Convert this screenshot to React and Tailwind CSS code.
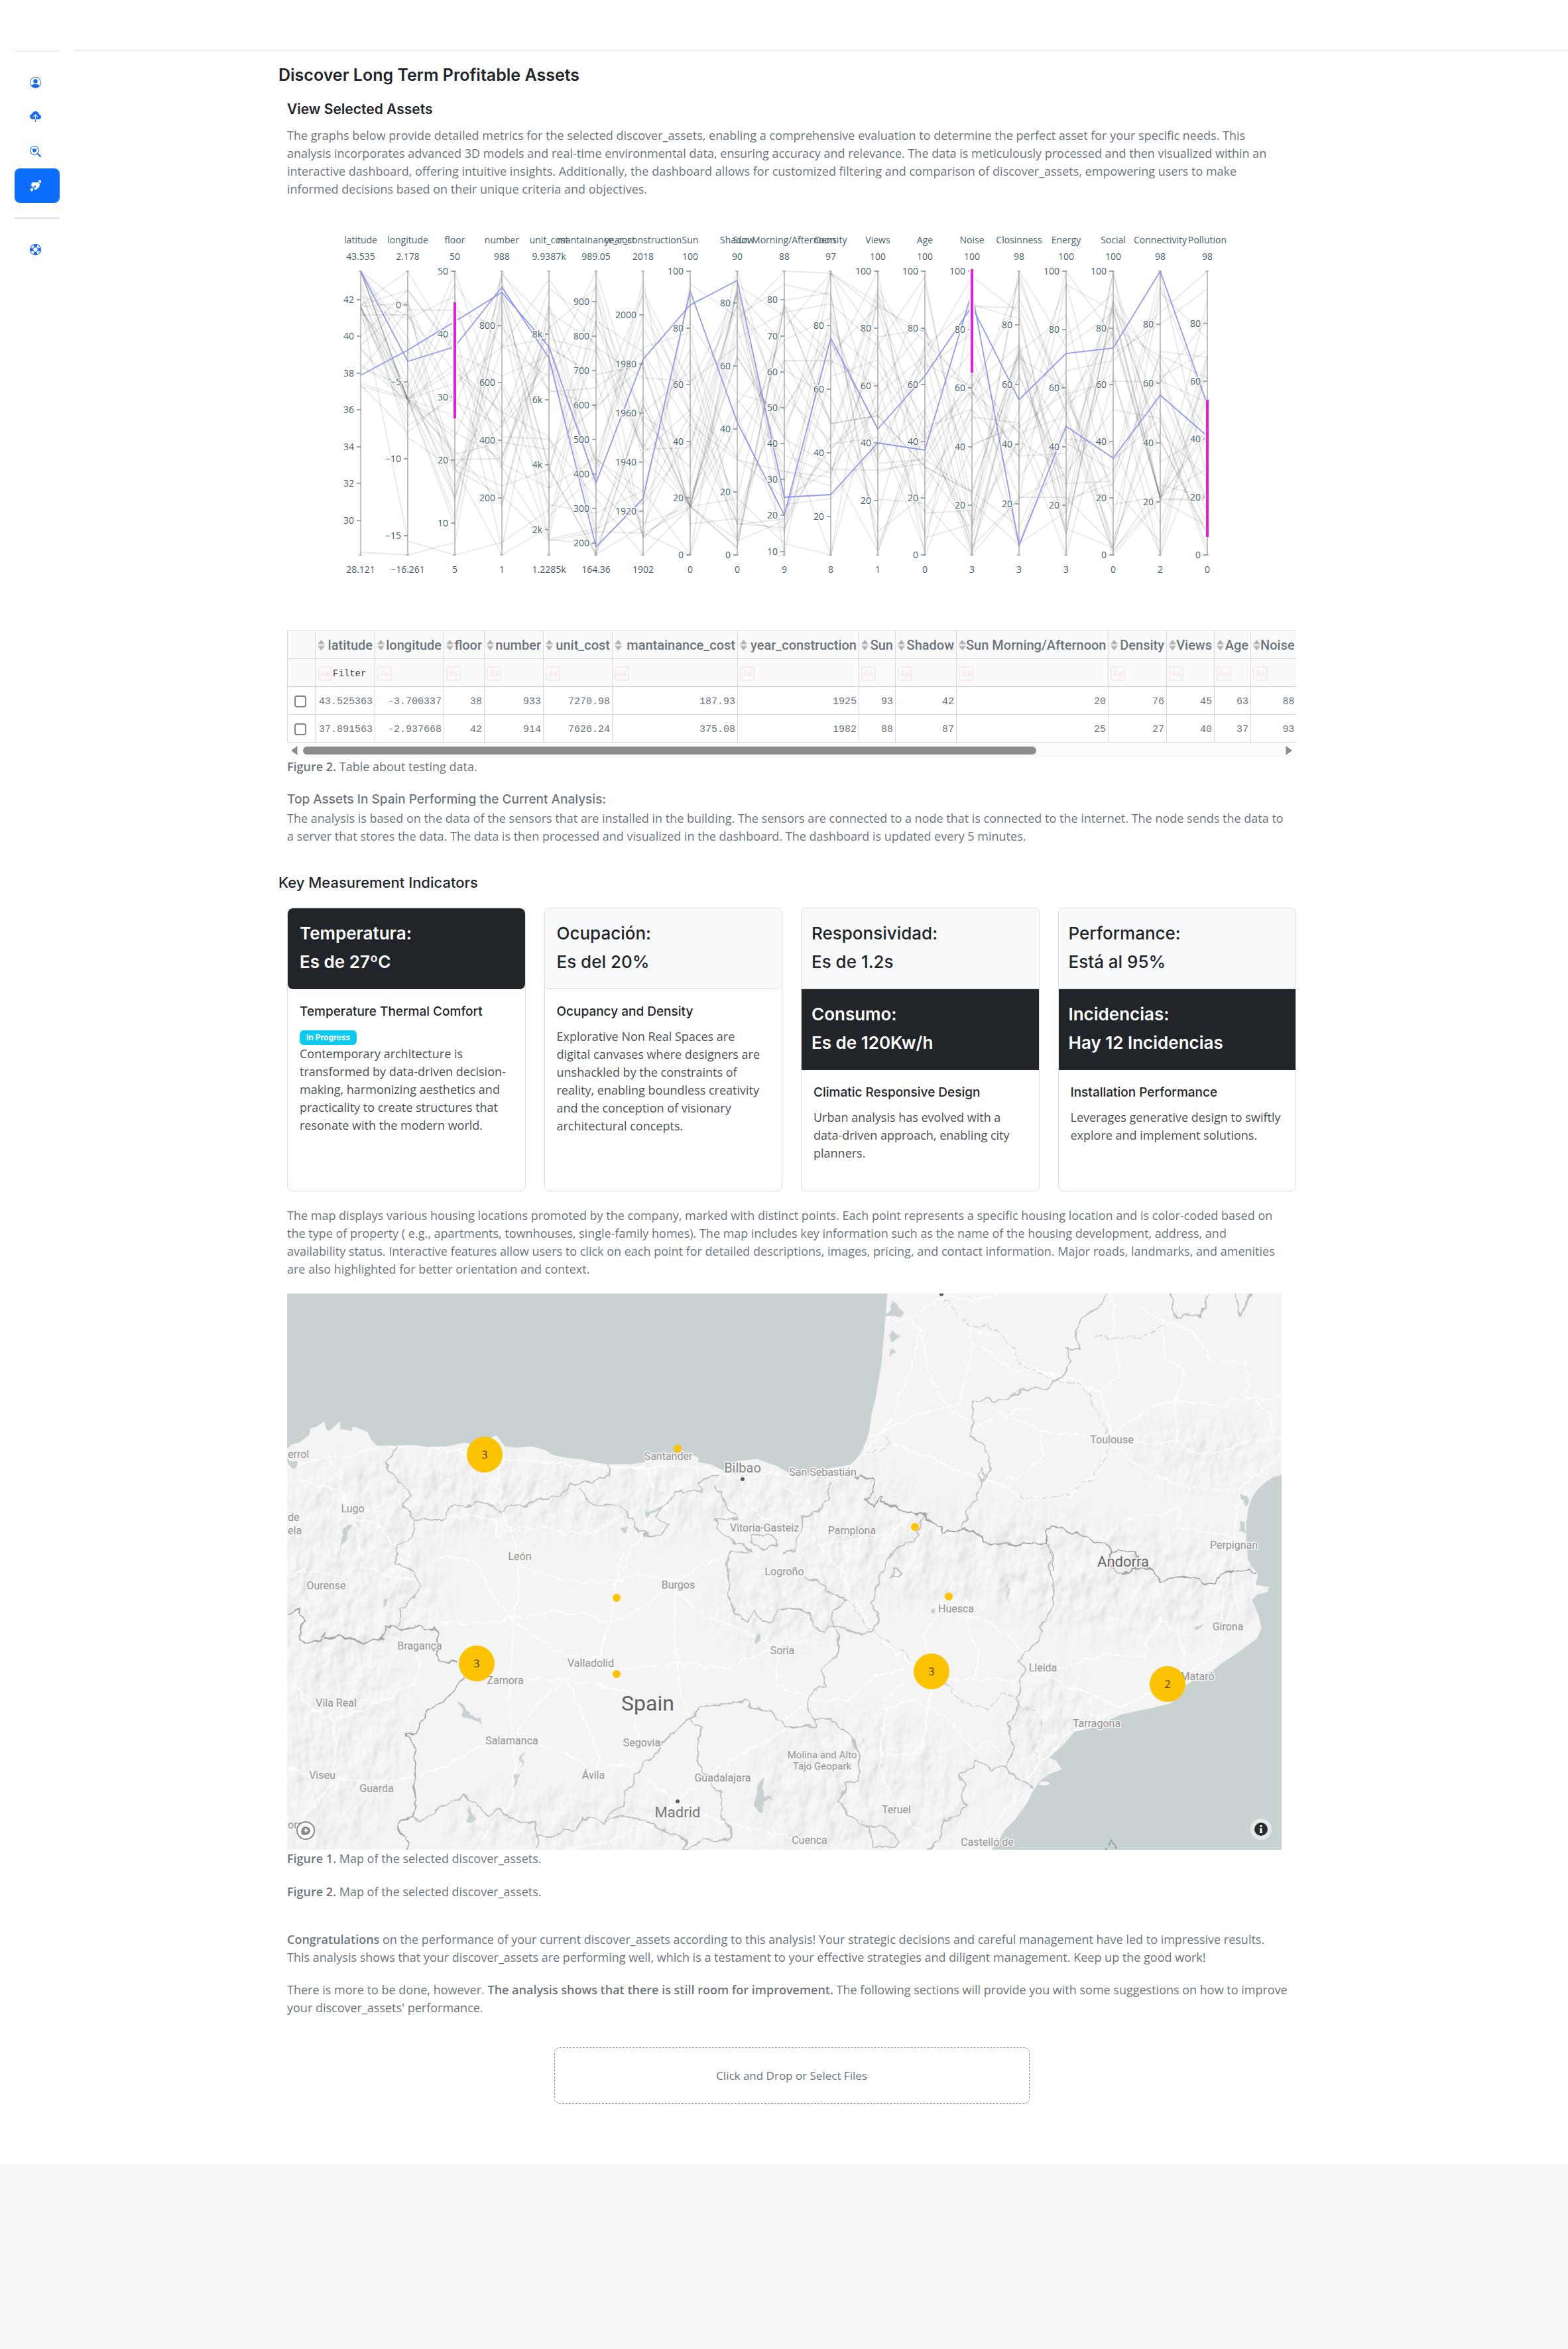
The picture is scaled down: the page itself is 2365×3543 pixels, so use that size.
import React from "react";
import {
  BsPersonCircle,
  BsCloudUploadFill,
  BsSearchHeart,
  BsArrowThroughHeartFill,
  BsLifePreserver,
} from "react-icons/bs";

/* ---------- Sidebar ---------- */

const NAV = [
  { label: "Profile", Icon: BsPersonCircle },
  { label: "Upload", Icon: BsCloudUploadFill },
  { label: "Search", Icon: BsSearchHeart },
  { label: "Discover", Icon: BsArrowThroughHeartFill, active: true },
];

function Sidebar() {
  return (
    <nav aria-label="Main" className="w-28 shrink-0 px-[22px] pt-[76px]">
      <div className="border-t-2 border-[#ececec] pt-5">
        {NAV.map(({ label, Icon, active }) => (
          <a
            key={label}
            href={"#" + label.toLowerCase()}
            aria-label={label}
            className={
              active
                ? "flex h-[52px] items-center justify-center rounded-lg bg-[#0d6efd] pr-1.5 text-white"
                : "flex h-[52px] items-center justify-center pr-1.5 text-[#1769ef]"
            }
          >
            <Icon className="size-[17px]" />
          </a>
        ))}
      </div>
      <div className="mt-[22px] border-t-2 border-[#dedede] pt-5">
        <a href="#help" aria-label="Help" className="flex h-[52px] items-center justify-center pr-1.5 text-[#1769ef]">
          <BsLifePreserver className="size-[17px]" />
        </a>
      </div>
    </nav>
  );
}

/* ---------- Parallel coordinates chart ---------- */

const AXES = [
  { name: "latitude", min: 28.121, max: 43.535, ticks: [30, 32, 34, 36, 38, 40, 42] },
  { name: "longitude", min: -16.261, max: 2.178, ticks: [-15, -10, -5, 0] },
  { name: "floor", min: 5, max: 50, ticks: [10, 20, 30, 40, 50] },
  { name: "number", min: 1, max: 988, ticks: [200, 400, 600, 800] },
  { name: "unit_cost", min: 1228.5, max: 9938.7, ticks: [2000, 4000, 6000, 8000], k: true, lo: "1.2285k", hi: "9.9387k" },
  { name: "mantainance_cost", min: 164.36, max: 989.05, ticks: [200, 300, 400, 500, 600, 700, 800, 900] },
  { name: "year_construction", min: 1902, max: 2018, ticks: [1920, 1940, 1960, 1980, 2000] },
  { name: "Sun", min: 0, max: 100, ticks: [0, 20, 40, 60, 80, 100] },
  { name: "Shadow", min: 0, max: 90, ticks: [0, 20, 40, 60, 80] },
  { name: "Sun Morning/Afternoon", min: 9, max: 88, ticks: [10, 20, 30, 40, 50, 60, 70, 80] },
  { name: "Density", min: 8, max: 97, ticks: [20, 40, 60, 80] },
  { name: "Views", min: 1, max: 100, ticks: [20, 40, 60, 80, 100] },
  { name: "Age", min: 0, max: 100, ticks: [0, 20, 40, 60, 80, 100] },
  { name: "Noise", min: 3, max: 100, ticks: [20, 40, 60, 80, 100] },
  { name: "Closinness", min: 3, max: 98, ticks: [20, 40, 60, 80] },
  { name: "Energy", min: 3, max: 100, ticks: [20, 40, 60, 80, 100] },
  { name: "Social", min: 0, max: 100, ticks: [0, 20, 40, 60, 80, 100] },
  { name: "Connectivity", min: 2, max: 98, ticks: [20, 40, 60, 80] },
  { name: "Pollution", min: 0, max: 98, ticks: [0, 20, 40, 60, 80] },
];

const SELECTED = [
  [43.525, -3.7, 38, 933, 7270.98, 187.93, 1925, 93, 42, 20, 76, 45, 63, 88, 55, 72, 73, 98, 52],
  [37.8916, -2.9377, 42, 914, 7626.24, 375.08, 1982, 88, 87, 25, 27, 40, 37, 93, 6, 47, 34, 56, 41],
];

const RANGES = [
  { axis: 2, from: 456, to: 631 },
  { axis: 13, from: 406, to: 562 },
  { axis: 18, from: 603, to: 810 },
];

const TOP = 409;
const BOTTOM = 837;
const axisX = (i) => 544 + i * 71 - (i > 9 ? 1 : 0);
const yOf = (a, v) => BOTTOM - ((v - a.min) / (a.max - a.min)) * (BOTTOM - TOP);
const minus = (v) => String(v).replace("-", "−");

/* Values that many records share: axis -> [fraction of the axis, probability] */
const CLUSTERS = { 0: [0.877, 0.4], 1: [0.55, 0.25], 7: [0.17, 0.35], 16: [0.86, 0.15], 17: [0.2, 0.15] };

function makeRecords(count) {
  let seed = 48271;
  const next = () => {
    seed = (seed * 16807) % 2147483647;
    return seed / 2147483647;
  };
  return Array.from({ length: count }, () =>
    AXES.map((_, i) => {
      const r = next();
      const s = next();
      const c = CLUSTERS[i];
      if (c && s < c[1]) return c[0] + (r - 0.5) * 0.01;
      if (i === 0) return s > 0.75 ? 1 : 0.58 + r * 0.42;
      if (i === 1) return s < 0.5 ? 0.82 + r * 0.05 : 0.4 + r * 0.6;
      /* let some values reach the very ends of the axis */
      return Math.min(1, Math.max(0, (r - 0.5) * 1.06 + 0.5));
    })
  );
}
const GENERATED = makeRecords(34);
const RECORDS = [
  [0.01, 0, 0.045, ...GENERATED[0].slice(3)],
  [0.877, 0.05, 0, 0.045, 0.16, 0.36, 0.8, 0.5, 0.2, 0.04, 0, 0.6, 0.8, 0.1, 0.4, 0.3, 0.9, 0.5, 0.1],
  ...GENERATED,
];

function ParallelChart() {
  return (
    <svg viewBox="433 330 1522 560" className="mt-[31px] block w-full font-['Open_Sans',sans-serif]" role="img" aria-label="Parallel coordinates of the selected assets">
      <g fill="none" stroke="#000" strokeOpacity="0.09" strokeWidth="1.8">
        {RECORDS.map((r, n) => (
          <polyline key={n} points={r.map((f, i) => axisX(i) + "," + Math.round(BOTTOM - f * (BOTTOM - TOP))).join(" ")} />
        ))}
      </g>
      <g fill="none" stroke="#8790ec" strokeWidth="1.8" strokeOpacity="0.9">
        {SELECTED.map((r, n) => (
          <polyline key={n} points={r.map((v, i) => axisX(i) + "," + Math.round(yOf(AXES[i], v))).join(" ")} />
        ))}
      </g>
      {AXES.map((a, i) => {
        const x = axisX(i);
        return (
          <g key={a.name} fontSize="14">
            <path d={`M${x - 3} ${TOP}h5M${x - 3} ${BOTTOM}h5M${x} ${TOP}V${BOTTOM}`} stroke="#999" strokeWidth="1.5" strokeOpacity="0.8" fill="none" />
            {a.ticks.map((t) => {
              const y = Math.round(yOf(a, t));
              return (
                <g key={t}>
                  <path d={`M${x - 6} ${y}h6`} stroke="#888" strokeWidth="1.5" />
                  <text x={x - 10} y={y + 5} textAnchor="end" fill="#46606b" stroke="#fff" strokeOpacity="0.8" strokeWidth="3" paintOrder="stroke">
                    {a.k ? t / 1000 + "k" : minus(t)}
                  </text>
                </g>
              );
            })}
            <g fill="#46606b" textAnchor="middle">
              <text x={x} y="367">{a.name}</text>
              <text x={x} y="392">{a.hi || minus(a.max)}</text>
              <text x={x} y="864">{a.lo || minus(a.min)}</text>
            </g>
          </g>
        );
      })}
      {RANGES.map((r) => (
        <g key={r.axis}>
          <path d={`M${axisX(r.axis)} ${r.from}V${r.to}`} stroke="#fff" strokeWidth="8" />
          <path d={`M${axisX(r.axis)} ${r.from}V${r.to}`} stroke="#e81ae4" strokeWidth="4" />
        </g>
      ))}
    </svg>
  );
}

/* ---------- Data table ---------- */

const COLUMNS = [
  ["latitude", "w-[90px]", "43.525363", "37.891563"],
  ["longitude", "w-[104px]", "-3.700337", "-2.937668"],
  ["floor", "w-[61px]", "38", "42"],
  ["number", "w-[89px]", "933", "914"],
  ["unit_cost", "w-[104px]", "7270.98", "7626.24"],
  ["mantainance_cost", "w-[189px]", "187.93", "375.08"],
  ["year_construction", "w-[183px]", "1925", "1982"],
  ["Sun", "w-[55px]", "93", "88"],
  ["Shadow", "w-[92px]", "42", "87"],
  ["Sun Morning/Afternoon", "w-[229px]", "20", "25"],
  ["Density", "w-[88px]", "76", "27"],
  ["Views", "w-[72px]", "45", "40"],
  ["Age", "w-[55px]", "63", "37"],
  ["Noise", "w-[69px]", "88", "93"],
];

function SortIcon() {
  return (
    <svg viewBox="0 0 11 16" className="h-4 w-[11px] shrink-0" fill="#b3b3b3" aria-hidden="true">
      <path d="M5.5 0 11 6.5H0zM5.5 16 11 9.5H0z" />
      <path d="M0 7.5h11v1H0z" fillOpacity="0.5" />
    </svg>
  );
}

function DataTable() {
  return (
    <div className="mt-[61px] w-full overflow-hidden">
      <table className="w-[1522px] table-fixed border-collapse border-y border-l border-[#d9d9d9] text-[#6c757d]">
        <colgroup>
          <col className="w-[42px]" />
          {COLUMNS.map((c) => (
            <col key={c[0]} className={c[1]} />
          ))}
        </colgroup>
        <thead className="bg-[#fafafa]">
          <tr className="h-[42px]">
            <td className="border-b border-[#d9d9d9]" />
            {COLUMNS.map(([name]) => (
              <th key={name} scope="col" className="border-b border-l border-[#d9d9d9] px-[3px] font-['Roboto',sans-serif] text-xl leading-6 font-medium">
                <button type="button" className="flex w-full items-center justify-between whitespace-nowrap">
                  <SortIcon />
                  {name}
                </button>
              </th>
            ))}
          </tr>
          <tr className="h-[42px]">
            <td className="border-b border-[#d9d9d9]" />
            {COLUMNS.map(([name], i) => (
              <td key={name} className="border-b border-l border-[#d9d9d9] px-[3px] pt-0.5">
                <div className="flex items-center">
                  <button type="button" aria-label={"Case sensitivity for " + name} className="h-[22px] w-[22px] shrink-0 rounded-sm border-2 border-[#f8e9ec] font-['Roboto',sans-serif] text-xs leading-4 text-[#f6e3e7]">
                    Aa
                  </button>
                  <input
                    type="text"
                    aria-label={"Filter " + name}
                    placeholder={i === 0 ? "Filter" : ""}
                    className="min-w-0 flex-1 bg-transparent pl-px font-['Liberation_Mono',monospace] text-sm outline-none placeholder:text-[#444]"
                  />
                </div>
              </td>
            ))}
          </tr>
        </thead>
        <tbody className="font-['Liberation_Mono',monospace] text-[15px]">
          {[2, 3].map((r) => (
            <tr key={r} className="h-[42px]">
              <td className="border-b border-[#d9d9d9] pt-0.5 pr-1 text-center leading-none">
                <input type="checkbox" aria-label={"Select row " + (r - 1)} className="inline-block size-[18px] appearance-none rounded border-2 border-[#858585] bg-white align-middle" />
              </td>
              {COLUMNS.map((c) => (
                <td key={c[0]} className="border-b border-l border-[#d9d9d9] pt-1 pr-[3px] text-right">
                  {c[r]}
                </td>
              ))}
            </tr>
          ))}
        </tbody>
      </table>
      <div className="flex h-[23px] items-center bg-[#fcfcfc] px-1.5" aria-hidden="true">
        <svg viewBox="0 0 10 14" className="h-3.5 w-2.5" fill="#8b8b8b"><path d="M9.500 0v14L0 7z" /></svg>
        <div className="mx-2 flex-1">
          <div className="h-3 w-3/4 rounded-full bg-[#8b8b8b]" />
        </div>
        <svg viewBox="0 0 10 14" className="h-3.5 w-2.5" fill="#8b8b8b"><path d="M.5 0v14L10 7z" /></svg>
      </div>
    </div>
  );
}

/* ---------- Indicator cards ---------- */

const CARDS = [
  {
    heads: [{ dark: true, a: "Temperatura:", b: "Es de 27ºC" }],
    title: "Temperature Thermal Comfort",
    badge: "In Progress",
    text: "Contemporary architecture is transformed by data-driven decision-making, harmonizing aesthetics and practicality to create structures that resonate with the modern world.",
  },
  {
    heads: [{ a: "Ocupación:", b: "Es del 20%" }],
    title: "Ocupancy and Density",
    text: "Explorative Non Real Spaces are digital canvases where designers are unshackled by the constraints of reality, enabling boundless creativity and the conception of visionary architectural concepts.",
  },
  {
    heads: [
      { a: "Responsividad:", b: "Es de 1.2s" },
      { dark: true, a: "Consumo:", b: "Es de 120Kw/h" },
    ],
    title: "Climatic Responsive Design",
    text: "Urban analysis has evolved with a data-driven approach, enabling city planners.",
  },
  {
    heads: [
      { a: "Performance:", b: "Está al 95%" },
      { dark: true, a: "Incidencias:", b: "Hay 12 Incidencias" },
    ],
    title: "Installation Performance",
    text: "Leverages generative design to swiftly explore and implement solutions.",
  },
];

function Card({ card }) {
  const single = card.heads.length === 1;
  return (
    <article className="min-h-[428px] overflow-hidden rounded-lg border border-[#dcdee0] bg-white">
      {card.heads.map((h) => (
        <header
          key={h.a}
          className={[
            "h-[122px] pt-4 font-['Inter',sans-serif] text-[26px] leading-[43px]",
            single ? "rounded-lg px-[18px]" : "px-[15px]",
            h.dark ? "bg-[#212529] font-semibold text-white" : "border-b border-[#d5d8da] bg-[#f8f9fa] font-medium text-[#212529]",
          ].join(" ")}
        >
          <p>{h.a}</p>
          <p>{h.b}</p>
        </header>
      ))}
      <div className="px-[18px] pt-[22px]">
        <h3 className="font-['Inter',sans-serif] text-[19px] leading-6 font-medium text-[#212529]">{card.title}</h3>
        {card.badge && (
          <span className="mt-4 block h-[22px] w-fit rounded-md bg-[#0dcaf0] px-2.5 font-['Inter',sans-serif] text-xs leading-[22px] font-bold text-white">
            {card.badge}
          </span>
        )}
        <p className={card.badge ? "text-lg leading-[27px] text-[#4c5154]" : "mt-3 text-lg leading-[27px] text-[#4c5154]"}>{card.text}</p>
      </div>
    </article>
  );
}

/* ---------- Map ---------- */

/* The geometry is stored in four tiles; each has its own origin and scale. */
const tile = (ox, oy, sy) => (data) =>
  data
    .split(" ")
    .map((p) => {
      const [x, y] = p.split(",").map(Number);
      return Math.round(ox + x / 1.96) + "," + Math.round(oy + y / sy);
    })
    .join(" ");
const NW = tile(420, 1810, 2.8);
const NE = tile(1180, 1930, 3);
const SW = tile(420, 2330, 2.8);
const SE = tile(1180, 2330, 2.8);

const BISCAY =
  "433,1951 " +
  NW("25,1050 40,1030 62,1022 90,990 95,962 110,958 138,932 142,965 150,975 185,930 182,965 200,970 215,975 220,955 240,962 265,980 275,1010 290,1035 350,1035 400,1032 440,1042 500,1040 550,1022 580,1035 620,1010 645,990 655,1010 670,1040 700,1045 750,1040 790,1055 810,1075 850,1085 900,1095 940,1110 980,1115 1040,1115 1080,1105 1100,1090 1160,1085 1215,1070 1245,1090 1240,1105 1280,1115 1300,1130 1315,1140 1320,1120 1360,1100 1415,1092 1440,1105 1470,1120 1510,1150") +
  " " +
  NE("80,885 130,855 165,845 200,838 215,815 235,775 255,695 262,610 275,540 285,450 292,380 300,240 305,130 310,62");

const MEDITERRANEAN =
  NE("1477,885 1455,895 1430,915 1405,950 1390,985 1380,1030 1372,1100 1372,1180 1378,1270 1395,1310 1408,1335 1400,1380 1440,1390 1435,1415 1405,1425 1390,1450") +
  " " +
  SE("1392,240 1410,300 1418,350 1405,395 1375,425 1345,460 1300,500 1275,530 1220,570 1195,590 1150,670 1100,690 1040,705 1000,720 960,745 905,778 865,790 835,840 790,900 810,910 828,950 790,970 760,1000 742,1035 725,1090 690,1160 660,1200 640,1250 620,1287 1477,1287");

const LAKES = [
  NW("25,1088 40,1108 60,1110 50,1140 25,1120"),
  NW("1080,1310 1110,1305 1140,1290 1135,1310 1100,1320 1090,1335"),
  NW("195,1390 215,1370 200,1440 180,1470 175,1550 185,1450"),
  NW("1010,1385 1035,1390 1025,1410"),
  NE("325,100 360,150 350,170 325,160 303,175"),
  NE("325,230 347,252 325,285 315,255"),
  NE("318,305 340,330 318,352"),
  NE("1355,965 1380,1000 1370,1025 1355,1000"),
  NE("1355,1090 1370,1100 1368,1145 1350,1130"),
  SW("527,670 545,672 555,710 590,725 605,765 580,740 545,720"),
  SW("565,1100 575,1140 585,1160 565,1175"),
  SW("1420,1000 1432,980 1428,1060 1470,1072 1435,1080 1430,1135 1405,1110"),
  SW("703,970 715,960 712,1000 697,1030"),
  SW("735,850 725,900 708,950 722,890"),
  SW("1408,385 1425,380 1430,410 1412,415"),
  SW("320,225 325,240 312,270"),
  SE("655,140 668,190 672,250 662,180"),
  SE("1200,330 1220,352 1245,340 1225,360"),
  SE("440,262 452,265 448,285 438,280"),
  SE("232,812 245,825 245,838"),
];

const COUNTRY = [
  NE("215,890 222,910 230,888 255,893 270,905 268,960 250,995 258,1015 275,1022 290,980 298,985 290,1010 330,1030 365,1050 395,1062 425,1060 432,1090 450,1105 475,1150 490,1135 520,1140 540,1122 570,1145 590,1180 615,1200 660,1190 690,1205 710,1190 780,1200 780,1130 795,1115 850,1145 890,1155 925,1185 955,1190 970,1235 1000,1222 1045,1240 1060,1290 1090,1315 1108,1345 1120,1375 1145,1350 1175,1340 1215,1350 1250,1380 1275,1378 1285,1350 1330,1320 1380,1312 1400,1332"),
  NE("970,1235 975,1290 985,1333 1010,1330 1050,1305 1090,1315"),
  SW("25,300 60,265 65,290 85,320 65,355 62,400 75,425 105,410 130,395 135,375 140,400 180,385 215,395 250,415 310,395 315,345 345,350 380,355 410,345 430,362 465,355 470,400 468,450 480,495 530,492"),
  SW("550,560 530,600 500,650 440,705 415,760 410,795 375,797 395,840 405,880 400,1000 408,1100 395,1150 360,1165 352,1200 375,1235 388,1287"),
];

const REGIONS = [
  NW("350,1040 340,1075 318,1110 330,1160 360,1190 375,1225 398,1240 365,1285 395,1330 400,1355 450,1345 495,1345 500,1310 520,1285 550,1300 580,1280 620,1275 655,1320 690,1285 730,1290 770,1265 830,1255 860,1210 895,1190 930,1200 950,1175 975,1165 978,1115"),
  NW("895,1215 905,1250 930,1290 990,1285 1030,1320 1050,1360 1065,1400 1100,1420 1140,1405 1150,1370 1115,1340 1140,1290 1190,1225 1250,1240 1245,1190 1280,1165 1310,1160"),
  NW("1290,1210 1310,1240 1320,1290 1355,1340 1290,1345 1300,1390 1325,1420 1370,1460 1400,1490 1340,1485 1325,1520 1335,1568"),
  NW("1395,1415 1450,1410 1475,1450 1440,1475 1395,1450 1395,1415"),
  NW("400,1355 395,1420 355,1460 345,1540"),
  SW("350,85 385,95 405,130 420,180 405,225 360,270 360,345"),
  SW("1335,30 1325,80 1330,130 1330,220 1350,285 1385,325 1410,280 1430,325 1460,330 1480,275 1520,265 1568,290"),
  NE("140,920 135,990 105,1050 60,1075 50,1150 35,1230 0,1235"),
  NE("430,1065 410,1080 400,1160 360,1200 320,1245"),
  SE("0,265 50,275 80,290 90,345 125,368 155,335 225,375 265,370 285,310 265,250 280,170 310,60 320,35"),
  SE("65,130 100,155 130,190 190,235 150,280 145,315 155,335"),
  SE("155,335 165,400 165,460 120,520 128,600 90,605 75,660 85,725 100,735 100,770 60,765 0,775"),
  SE("100,735 150,745 190,790 215,850 230,910 225,1000 190,1010 165,1090 215,1160 255,1190 290,1185 345,1250 330,1280 270,1270 255,1190"),
  SE("425,1287 460,1255 478,1165 520,1140 545,1100 530,1060 540,1010 525,970 555,950 570,910 620,950 660,940 685,980 740,1030"),
  SE("660,940 685,860 665,760 695,700 700,640 700,580 720,520 700,490 720,450 755,410 765,350 800,260 805,160 785,100 795,60 790,0"),
  NE("780,1200 800,1240 800,1320"),
  NE("955,62 940,120 905,155 865,220 880,315 840,315 850,370 830,440 800,465 780,495 750,485 680,515 630,560 610,530 560,555 565,640 550,715 590,735 610,800 615,860 590,930 570,1000 545,1060 535,1120"),
  NE("590,845 600,880 590,915 580,880 590,845"),
  NE("1150,62 1150,130 1165,180 1180,160 1235,165 1265,62"),
  NE("1335,62 1355,165 1385,62"),
  NE("335,1305 352,1330 322,1348 335,1305"),
  SW("1568,760 1500,775 1450,700 1400,680 1380,660 1340,670 1250,685 1215,735 1170,790 1130,840 1110,905 1080,915 1050,995 1025,1040 1020,1100 980,1130 965,1180 930,1150 900,1160 880,1200 840,1210 810,1235 765,1225 765,1170 720,1180 685,1150 655,1115 620,1140 590,1110 550,1055 510,1090 465,1120 430,1160 395,1155"),
  SW("1215,735 1250,770 1240,850 1235,900 1255,960 1300,1030 1320,1100 1310,1155 1330,1175 1340,1240 1260,1250 1200,1287"),
  SW("1200,1287 1200,1240 1130,1200 1060,1160 1010,1140 965,1180"),
  SW("765,1225 765,1287"),
];

const ROADS = [
  NW("25,1160 60,1120 140,1085 210,1080 300,1040 420,1040 540,1060 640,1100 760,1110 900,1120 1000,1130 1100,1130 1180,1120 1260,1130 1370,1180 1450,1150 1540,1180"),
  NW("60,1180 130,1210 180,1220 215,1340 240,1430 240,1540"),
  NW("140,1085 185,1160 180,1220 215,1340 290,1300 350,1240"),
  NW("215,1340 290,1360 330,1440 390,1500 370,1568"),
  NW("640,1100 650,1200 660,1320 700,1440 710,1568"),
  NW("500,1340 590,1330 640,1360 640,1420 720,1380 800,1380 840,1410 940,1400 1020,1330"),
  NW("1090,1130 1110,1220 1100,1290 1080,1400 1040,1480 1020,1568"),
  NW("1370,1180 1370,1260 1440,1350 1480,1330 1568,1400"),
  NE("310,180 370,185 440,110 475,75 560,90 640,70"),
  NE("475,80 550,210 560,300 540,460 520,560 490,580 550,640"),
  NE("375,185 415,240 415,310 440,440 490,580 420,600 330,660 250,720 240,790 200,850"),
  NE("410,200 380,420 345,520 330,620 290,700 240,780"),
  NE("560,220 650,260 690,350 700,380 820,450 940,510 960,620 975,700 1030,640 1100,570 1160,550 1320,570 1320,540 1477,530"),
  NE("560,290 620,330 680,420 720,400 840,440 940,510 1000,420 990,320 980,250 980,120 960,62"),
  NE("980,740 1030,820 1110,890 1200,940 1340,955 1420,860 1477,780"),
  NE("980,740 1090,740 1170,730 1210,780 1300,790 1350,740 1420,720 1477,715"),
  NE("1170,730 1160,550 1190,430 1130,340 1120,190 1060,130"),
  NE("1120,190 1200,220 1260,320 1250,350 1370,380 1380,470 1360,510 1440,600 1450,690"),
  NE("950,770 940,860 870,940 850,985 700,985 640,920 600,910 520,860 420,790 320,745 240,790"),
  NE("640,610 720,650 760,690 850,700 960,710"),
  NE("760,690 770,800 720,880 640,920"),
  NE("560,680 640,610 740,580"),
  NE("0,940 60,970 100,1060 90,1150 110,1200 200,1180 320,1150 390,1060"),
  NE("110,1200 150,1280 190,1330 180,1400 210,1490"),
  NE("1370,960 1340,1050 1340,1180 1330,1300 1310,1400 1300,1540"),
  NE("1020,1080 1130,1060 1180,1020 1170,1120 1330,1160"),
  SW("25,140 70,110 180,130 250,90 330,130 400,150"),
  SW("70,230 120,330 60,410"),
  SW("710,70 710,220 690,320 690,500 680,620 690,800 700,950 690,1080 600,1250"),
  SW("710,90 850,150 960,160 1060,130 1180,150 1330,30"),
  SW("480,45 580,70 620,180 690,320 760,390 850,470 900,460"),
  SW("1020,30 1000,130 990,240 980,340 950,450 930,490 850,570 780,650 700,800 600,850 470,950 350,1000 250,1000 100,980 25,940"),
  SW("1180,170 1170,320 1180,500 1190,640 1220,740"),
  SW("980,340 1100,240 1180,160"),
  SW("480,330 620,330 690,310 820,280 900,290 970,330"),
  SW("680,560 850,570 950,590 1030,620 1060,780 1060,860"),
  SW("930,520 1060,520 1180,500 1330,520 1480,420 1568,400"),
  SW("1180,200 1260,300 1400,380 1480,430 1470,590 1568,650"),
  SW("850,570 880,660 920,780 950,900 940,940 1060,920"),
  SW("690,830 800,850 880,900 930,970"),
  SW("160,740 240,700 320,650 400,590 420,500 400,430 320,390"),
  SW("30,560 100,700 160,740 175,860 160,1000 60,1180"),
  SW("1180,1080 1100,1000 1040,940 1000,900"),
  SW("1180,1080 1260,980 1350,900 1500,780"),
  SW("1180,1080 1290,1160 1400,1200 1568,1250"),
  SW("1180,1080 1080,1190 950,1260 850,1287"),
  SE("190,0 190,180 280,390 360,480 420,560 550,570 700,570 770,540 860,610 920,630 1000,690 1060,640 1130,580"),
  SE("440,500 420,380 450,310 500,220 500,130"),
  SE("520,290 600,320 680,400 770,540 870,500 960,460 1070,480 1080,400 1120,310"),
  SE("910,640 920,730 960,720 840,800 780,900 740,960 720,1020 640,1150 590,1250"),
  SE("300,700 380,650 440,690 490,740 570,870 600,830 650,870"),
  SE("370,560 310,650 290,850 290,960 330,1080 380,1180 430,1230"),
  SE("0,740 80,660 210,650 260,560 360,520"),
  SE("440,600 430,700 410,880 300,890"),
  SE("1120,310 1180,400 1190,500 1170,560 1290,460 1310,350 1340,200 1330,130"),
  SE("540,230 560,400 580,440 570,560"),
];

const RIVERS = [
  NE("480,90 520,160 555,215 610,205 650,260 690,330 700,380 770,430 830,465 880,470 910,530 940,630 975,720 945,830 915,900 865,945"),
  NE("700,985 760,990 850,975"),
  NE("925,255 980,265 1050,262 1100,235 1130,210"),
  NE("245,780 290,775 320,745 305,710"),
  SE("190,235 270,370 340,430 380,490"),
  SE("480,580 515,650 560,680 610,690 650,625 690,640 705,690 750,700 770,770 745,850 750,920"),
];

const PLACES = [
  ["Lugo", 532, 2281], ["León", 784, 2353], ["Santander", 1008, 2202],
  ["San Sebastián", 1241, 2226], ["Vitoria-Gasteiz", 1153, 2310], ["Logroño", 1183, 2376],
  ["Pamplona", 1285, 2314], ["Toulouse", 1677, 2177], ["Perpignan", 1861, 2336],
  ["Huesca", 1442, 2432], ["Ourense", 492, 2397], ["Burgos", 1023, 2396],
  ["Bragança", 633, 2488], ["Zamora", 762, 2540], ["Valladolid", 891, 2514],
  ["Soria", 1180, 2495], ["Vila Real", 507, 2574], ["Salamanca", 772, 2631],
  ["Segovia", 968, 2634], ["Viseu", 486, 2683], ["Guarda", 568, 2703],
  ["Ávila", 895, 2683], ["Guadalajara", 1090, 2687], ["Teruel", 1352, 2735],
  ["Cuenca", 1221, 2781], ["Castelló de", 1489, 2784], ["Tarragona", 1654, 2605],
  ["Lleida", 1573, 2521], ["Girona", 1852, 2459], ["Mataró", 1806, 2534],
];

const EDGE_PLACES = [["errol", 2199], ["de", 2294], ["ela", 2314], ["ora", 2758]];

const CLUSTER_PINS = [
  [731, 2194, 3],
  [719, 2509, 3],
  [1405, 2521, 3],
  [1761, 2540, 2],
];
const PINS = [[1022, 2185], [1380, 2303], [1431, 2408], [930, 2410], [930, 2525]];

const MOUNTAINS = [
  [650, 2255, 230, 60], [960, 2260, 220, 55], [1480, 2350, 260, 75], [1720, 2390, 230, 80],
  [530, 2400, 140, 110], [1180, 2420, 110, 70], [500, 2620, 110, 180], [860, 2750, 200, 50],
  [1300, 2700, 170, 110], [1250, 2260, 120, 60], [1820, 2190, 110, 50],
  [1580, 2640, 70, 120],
];

function MapView() {
  return (
    <div className="relative mt-[23px] mr-[22px]">
      <svg viewBox="433 1951 1500 839" className="block w-full font-['Roboto',sans-serif]" role="img" aria-label="Map of northern Spain with clustered housing locations">
        <defs>
          <filter id="jag" x="-5%" y="-5%" width="110%" height="110%">
            <feTurbulence type="fractalNoise" baseFrequency="0.07" numOctaves="2" seed="4" />
            <feDisplacementMap in="SourceGraphic" scale="12" xChannelSelector="R" yChannelSelector="G" />
          </filter>
          <filter id="relief" x="0" y="0" width="100%" height="100%">
            <feTurbulence type="fractalNoise" baseFrequency="0.035 0.025" numOctaves="3" seed="11" />
            <feDiffuseLighting surfaceScale="5" diffuseConstant="1.08" lightingColor="#f6f6f5">
              <feDistantLight azimuth="225" elevation="62" />
            </feDiffuseLighting>
          </filter>
          <filter id="soft" x="-20%" y="-20%" width="140%" height="140%">
            <feGaussianBlur stdDeviation="22" />
          </filter>
          <mask id="ranges">
            <g fill="#fff" fillOpacity="0.75" filter="url(#soft)">
              {MOUNTAINS.map(([x, y, rx, ry]) => (
                <ellipse key={x + "-" + y} cx={x} cy={y} rx={rx} ry={ry} />
              ))}
            </g>
          </mask>
        </defs>
        <rect x="433" y="1951" width="1500" height="839" fill="#f3f4f3" />
        <g mask="url(#ranges)" opacity="0.6">
          <rect x="433" y="1951" width="1500" height="839" filter="url(#relief)" />
        </g>
        <g filter="url(#jag)" fill="none" stroke="#fff" strokeWidth="2" strokeOpacity="0.8">
          {ROADS.map((p, i) => <polyline key={i} points={p} />)}
        </g>
        <g filter="url(#jag)" fill="#c9d2d3">
          {LAKES.map((p, i) => <polygon key={i} points={p} />)}
          {RIVERS.map((p, i) => <polyline key={i} points={p} fill="none" stroke="#cdd5d6" strokeWidth="1.5" strokeDasharray="9 3" />)}
        </g>
        <g filter="url(#jag)" fill="none" strokeLinejoin="round">
          {REGIONS.map((p, i) => <polyline key={i} points={p} stroke="#bfbfbf" strokeWidth="2" />)}
          {COUNTRY.map((p, i) => <polyline key={i} points={p} stroke="#a3a3a3" strokeWidth="2" />)}
        </g>
        <polygon points={BISCAY} fill="#c9d2d3" stroke="#c9d2d3" strokeLinejoin="round" />
        <polygon points={MEDITERRANEAN} fill="#c9d2d3" stroke="#c9d2d3" strokeLinejoin="round" />
        <ellipse cx="1575" cy="2690" rx="8" ry="3" fill="#f3f4f3" />
        <path d="M1672 2784l4-8 6 8 2 5M1667 2789h3" stroke="#93a1a4" strokeWidth="2" fill="none" />

        <g stroke="#f5f5f4" strokeWidth="3" paintOrder="stroke" strokeLinejoin="round" fill="#939393" fontSize="16">
          <g textAnchor="middle">
            {PLACES.map(([name, x, y]) => (
              <text key={name} x={x} y={y}>{name}</text>
            ))}
            <text x="1240" y="2652" fontSize="15">Molina and Alto</text>
            <text x="1240" y="2669" fontSize="15">Tajo Geopark</text>
            <text x="1120" y="2221" fontSize="20" fill="#858585">Bilbao</text>
            <text x="1022" y="2741" fontSize="22" fill="#777">Madrid</text>
            <text x="1694" y="2363" fontSize="22" fill="#666">Andorra</text>
            <text x="977" y="2580" fontSize="32" fill="#606060">Spain</text>
          </g>
          {EDGE_PLACES.map(([name, y]) => (
            <text key={name} x="434" y={y}>{name}</text>
          ))}
        </g>
        <g fill="#5c5c5c">
          <circle cx="1120" cy="2231" r="3" />
          <circle cx="1022" cy="2717" r="3" />
          <circle cx="1420" cy="1952" r="3" />
        </g>
        <g fill="#fdc300">
          {PINS.map(([x, y]) => <circle key={x + "-" + y} cx={x} cy={y} r="6" />)}
          {CLUSTER_PINS.map(([x, y]) => <circle key={x} cx={x} cy={y} r="27" />)}
        </g>
        <g fill="#4a3c0c" fontSize="16" textAnchor="middle" className="font-['Open_Sans',sans-serif]">
          {CLUSTER_PINS.map(([x, y, n]) => <text key={x} x={x} y={y + 6}>{n}</text>)}
        </g>
      </svg>
      <a href="#map-provider" aria-label="Map provider" className="absolute bottom-[15px] left-3.5">
        <svg viewBox="0 0 28 28" className="size-7">
          <circle cx="14" cy="14" r="13" fill="#fff" stroke="#8a8a8a" strokeWidth="2" />
          <path d="M8 20c-2-6 0-12 6-12 4 0 7 3 7 6 0 6-7 8-13 6z" fill="#8a8a8a" />
          <path d="M14.500 9.500l1.300 2.900 2.900 1.300-2.900 1.300-1.300 2.900-1.300-2.900-2.900-1.300 2.900-1.300z" fill="#fff" />
        </svg>
      </a>
      <button type="button" aria-label="Map attribution" className="absolute right-[15px] bottom-[15px] flex size-8 items-center justify-center rounded-full bg-white/50">
        <svg viewBox="0 0 20 20" className="size-5">
          <circle cx="10" cy="10" r="10" fill="#2b2b2b" />
          <path d="M8.500 4h3v3h-3zM8 8.500h3.500V14H12v2H8v-2h.5v-3.500H8z" fill="#fff" />
        </svg>
      </button>
    </div>
  );
}

/* ---------- Page ---------- */

export default function App() {
  return (
    <div className="min-h-screen bg-[#f7f7f7] font-['Open_Sans',sans-serif] text-lg leading-[27px] text-[#6c757d]">
      <div className="flex bg-white">
        <Sidebar />
        <div className="min-w-0 flex-1">
          <div className="h-[77px] border-b-2 border-[#ececec]" />
          <main className="mr-[410px] ml-[308px] pt-[18px] pb-[91px]">
            <h1 className="font-['Inter',sans-serif] text-[25px] leading-9 font-semibold text-[#212529]">
              Discover Long Term Profitable Assets
            </h1>
            <section className="mt-[18px] pl-[13px]">
              <h2 className="font-['Inter',sans-serif] text-[21px] leading-8 font-semibold text-[#212529]">View Selected Assets</h2>
              <p className="mt-2.5 pr-[22px]">
                The graphs below provide detailed metrics for the selected discover_assets, enabling a comprehensive
                evaluation to determine the perfect asset for your specific needs. This analysis incorporates advanced
                3D models and real-time environmental data, ensuring accuracy and relevance. The data is meticulously
                processed and then visualized within an interactive dashboard, offering intuitive insights.
                Additionally, the dashboard allows for customized filtering and comparison of discover_assets,
                empowering users to make informed decisions based on their unique criteria and objectives.
              </p>
              <ParallelChart />
              <DataTable />
              <p>
                <strong className="font-semibold">Figure 2.</strong> Table about testing data.
              </p>
              <h3 className="mt-[22px] font-['Inter',sans-serif] text-[19px] font-medium">
                Top Assets In Spain Performing the Current Analysis:
              </h3>
              <p className="mt-0.5 pr-2">
                The analysis is based on the data of the sensors that are installed in the building. The sensors are
                connected to a node that is connected to the internet. The node sends the data to a&nbsp;server that
                stores the data. The data is then processed and visualized in the dashboard. The dashboard is updated
                every 5 minutes.
              </p>
            </section>

            <h2 className="mt-[38px] font-['Inter',sans-serif] text-[22px] leading-9 font-medium text-[#212529]">
              Key Measurement Indicators
            </h2>
            <section className="mt-5 pl-[13px]">
              <div className="grid grid-cols-4 gap-7">
                {CARDS.map((c) => (
                  <Card key={c.title} card={c} />
                ))}
              </div>
              <p className="mt-[23px] pr-[22px]">
                The map displays various housing locations promoted by the company, marked with distinct points. Each
                point represents a specific housing location and is color-coded based on the type of property ( e.g.,
                apartments, townhouses, single-family homes). The map includes key information such as the name of the
                housing development, address, and availability status. Interactive features allow users to click on
                each point for detailed descriptions, images, pricing, and contact information. Major roads, landmarks,
                and amenities are also highlighted for better orientation and context.
              </p>
              <MapView />
              <p>
                <strong className="font-semibold">Figure 1.</strong> Map of the selected discover_assets.
              </p>
              <p className="mt-[23px]">
                <strong className="font-semibold">Figure 2.</strong> Map of the selected discover_assets.
              </p>
              <p className="mt-[45px] pr-[22px]">
                <strong className="font-semibold">Congratulations</strong> on the performance of your current
                discover_assets according to this analysis! Your strategic decisions and careful management have led to
                impressive results. This analysis shows that your discover_assets are performing well, which is a
                testament to your effective strategies and diligent management. Keep up the good work!
              </p>
              <p className="mt-[22px]">
                There is more to be done, however.{" "}
                <strong className="font-semibold">The analysis shows that there is still room for improvement.</strong>{" "}
                The following sections will provide you with some suggestions on how to improve your discover_assets'
                performance.
              </p>
              <button
                type="button"
                className="mx-auto mt-[46px] block h-[85px] w-full max-w-[717px] rounded-lg border border-dashed border-[#8a8f94] text-[17px]"
              >
                Click and Drop or Select Files
              </button>
            </section>
          </main>
        </div>
      </div>
    </div>
  );
}
